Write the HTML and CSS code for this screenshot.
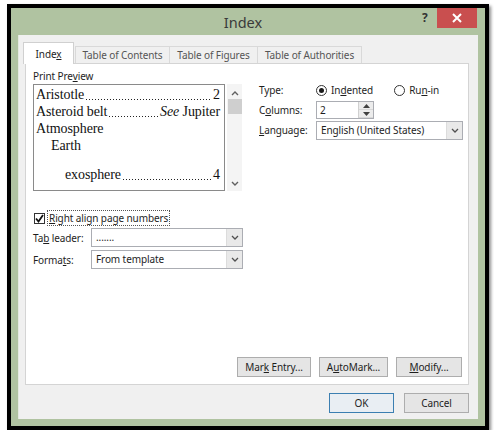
FILE: index.html
```html
<!DOCTYPE html>
<html>
<head>
<meta charset="utf-8">
<link rel="stylesheet" href="styles.css">
</head>
<body>
<div class="dialog">
  <div class="titlebar">
    <span class="title">Index</span>
    <span class="help">?</span>
    <span class="close"><svg width="10" height="10" viewBox="0 0 10 10"><path d="M1 1 L9 9 M9 1 L1 9" stroke="#fff" stroke-width="2"/></svg></span>
  </div>
  <div class="client">
    <div class="tabs">
      <div class="tab active"><span>Inde<u>x</u></span></div>
      <div class="tab"><span>Table of Contents</span></div>
      <div class="tab"><span>Table of Figures</span></div>
      <div class="tab"><span>Table of Authorities</span></div>
    </div>
    <div class="panel">
      <div class="top">
        <div class="preview-col">
          <div class="label">Print Pre<u>v</u>iew</div>
          <div class="preview-wrap">
            <div class="preview">
              <div class="entry"><span>Aristotle</span><span class="leader"></span><span>2</span></div>
              <div class="entry"><span>Asteroid belt</span><span class="leader"></span><span><i>See</i> Jupiter</span></div>
              <div class="entry"><span>Atmosphere</span></div>
              <div class="entry lvl2"><span>Earth</span></div>
              <div class="entry lvl3"><span>exosphere</span><span class="leader"></span><span>4</span></div>
            </div>
            <div class="scrollbar">
              <svg class="arrow" width="8" height="6" viewBox="0 0 8 6"><path d="M1 5 L4 2 L7 5" stroke="#606060" stroke-width="1.4" fill="none"/></svg>
              <div class="thumb"></div>
              <div class="track"></div>
              <svg class="arrow" width="8" height="6" viewBox="0 0 8 6"><path d="M1 1 L4 4 L7 1" stroke="#606060" stroke-width="1.4" fill="none"/></svg>
            </div>
          </div>
        </div>
        <div class="options">
          <div class="opt-label">Type:</div>
          <div class="radios">
            <span class="radio checked"></span><span class="radio-text">In<u>d</u>ented</span>
            <span class="radio second"></span><span class="radio-text">Ru<u>n</u>-in</span>
          </div>
          <div class="opt-label">C<u>o</u>lumns:</div>
          <div class="spin">
            <span class="spin-value">2</span>
            <span class="spin-btns">
              <span class="spin-btn"><svg width="7" height="4" viewBox="0 0 7 4"><path d="M0 4 L3.5 0 L7 4Z" fill="#404040"/></svg></span>
              <span class="spin-btn"><svg width="7" height="4" viewBox="0 0 7 4"><path d="M0 0 L3.5 4 L7 0Z" fill="#404040"/></svg></span>
            </span>
          </div>
          <div class="opt-label"><u>L</u>anguage:</div>
          <div class="select lang">
            <span class="select-value">English (United States)</span>
            <span class="drop"><svg width="8" height="5" viewBox="0 0 8 5"><path d="M1 1 L4 4 L7 1" stroke="#505050" stroke-width="1.3" fill="none"/></svg></span>
          </div>
        </div>
      </div>
      <div class="checkrow">
        <span class="checkbox"><svg width="9" height="9" viewBox="0 0 9 9"><path d="M1 4.5 L3.5 7.5 L8 1" stroke="#111" stroke-width="1.8" fill="none"/></svg></span>
        <span class="focus"><u>R</u>ight align page numbers</span>
      </div>
      <div class="form">
        <div class="form-label">Ta<u>b</u> leader:</div>
        <div class="select">
          <span class="select-value">.......</span>
          <span class="drop"><svg width="8" height="5" viewBox="0 0 8 5"><path d="M1 1 L4 4 L7 1" stroke="#505050" stroke-width="1.3" fill="none"/></svg></span>
        </div>
        <div class="form-label">Forma<u>t</u>s:</div>
        <div class="select">
          <span class="select-value">From template</span>
          <span class="drop"><svg width="8" height="5" viewBox="0 0 8 5"><path d="M1 1 L4 4 L7 1" stroke="#505050" stroke-width="1.3" fill="none"/></svg></span>
        </div>
      </div>
      <div class="spacer"></div>
      <div class="buttons">
        <span class="btn w-mark"><span>Mar<u>k</u> Entry...</span></span>
        <span class="btn w-auto"><span>A<u>u</u>toMark...</span></span>
        <span class="btn w-mod"><span><u>M</u>odify...</span></span>
      </div>
    </div>
    <div class="footer">
      <span class="btn ok"><span>OK</span></span>
      <span class="btn"><span>Cancel</span></span>
    </div>
  </div>
</div>
</body>
</html>
```

FILE: styles.css
```css
html, body {
  margin: 0;
  padding: 0;
  background: #ffffff;
}

body {
  padding: 4px 0 0 7px;
  font-family: "Noto Sans", "Open Sans", sans-serif;
  font-size: 10px;
  color: #1e1e1e;
  letter-spacing: -0.1px;
}

u {
  text-decoration: underline;
  text-underline-offset: 1px;
}

.dialog {
  width: 474px;
  height: 418px;
  border: 4px solid #000;
  background: #b0c3a1;
  box-shadow: 2px 2px 3px rgba(0, 0, 0, 0.45);
  display: flex;
  flex-direction: column;
}

.titlebar {
  height: 27px;
  display: flex;
  align-items: flex-start;
}

.title {
  flex: 1;
  text-align: center;
  font-size: 14.5px;
  line-height: 28px;
  color: #3a3a3a;
  letter-spacing: 0;
  padding-left: 53px;
}

.help {
  width: 8px;
  line-height: 20px;
  font-weight: bold;
  font-size: 12px;
  color: #333;
  margin-right: 7px;
}

.close {
  width: 40px;
  height: 20px;
  background: #c94f4f;
  margin-right: 8px;
  display: flex;
  align-items: center;
  justify-content: center;
}

.client {
  flex: 1;
  margin: 0 7px 7px 7px;
  background: #f0f0f0;
  padding: 7px 9px 0 6px;
  display: flex;
  flex-direction: column;
  border-left: 1px solid #e4e9e0;
}

.tabs {
  display: flex;
  align-items: flex-end;
  height: 21px;
  position: relative;
  z-index: 1;
}

.tab {
  height: 17px;
  line-height: 16px;
  border: 1px solid #d9d9d9;
  border-bottom: none;
  background: #f0f0f0;
  color: #555;
  margin-left: -1px;
  box-sizing: border-box;
  white-space: nowrap;
  display: flex;
  justify-content: center;
}

.tab:nth-child(2) { width: 95px; margin-left: 1px; }
.tab:nth-child(3) { width: 89px; }
.tab:nth-child(4) { width: 105px; }

.tab.active {
  height: 22px;
  line-height: 22px;
  width: 51px;
  background: #fff;
  color: #1e1e1e;
  border-color: #d0d0d0;
  margin-left: -2px;
  margin-bottom: -1px;
}

.panel {
  height: 322px;
  box-sizing: border-box;
  border: 1px solid #d4d4d4;
  background: #fff;
  padding: 6px 6px 7px 7px;
  display: flex;
  flex-direction: column;
}

.top {
  display: flex;
}

.preview-col {
  width: 210px;
}

.label {
  line-height: 13px;
  margin-bottom: 1px;
}

.preview-wrap {
  display: flex;
  height: 107px;
}

.preview {
  width: 192px;
  box-sizing: border-box;
  border: 1px solid #8a8a8a;
  padding: 1px 4px 0 2px;
  font-family: "Liberation Serif", "Times New Roman", serif;
  font-size: 14px;
  color: #111;
  line-height: 17px;
  overflow: hidden;
}

.entry {
  display: flex;
  white-space: nowrap;
}

.leader {
  flex: 1;
  margin: 0 1px;
  background-image: radial-gradient(circle, #222 0.6px, transparent 0.9px);
  background-size: 3px 3px;
  background-repeat: repeat-x;
  background-position: 0 12px;
}

.lvl2 { padding-left: 15px; }
.lvl3 { padding-left: 29px; margin-top: 12px; }

.scrollbar {
  width: 15px;
  margin-left: 2px;
  background: #f4f4f4;
  display: flex;
  flex-direction: column;
  align-items: center;
  padding: 6px 0 4px;
  box-sizing: border-box;
}

.thumb {
  width: 14px;
  height: 15px;
  background: #cfcfcf;
  margin-top: 3px;
}

.track { flex: 1; }

.options {
  margin-left: 17px;
  margin-top: 10px;
  display: grid;
  grid-template-columns: 57px auto;
  grid-auto-rows: 20px;
  align-items: center;
}

.radios {
  display: flex;
  align-items: center;
}

.radio {
  width: 11px;
  height: 11px;
  border: 1px solid #333;
  border-radius: 50%;
  box-sizing: border-box;
  display: flex;
  align-items: center;
  justify-content: center;
  margin-right: 4px;
}

.radio.checked::after {
  content: "";
  width: 5px;
  height: 5px;
  border-radius: 50%;
  background: #1a1a1a;
}

.radio.second { margin-left: 21px; }

.spin {
  width: 58px;
  height: 18px;
  box-sizing: border-box;
  border: 1px solid #abadb3;
  display: flex;
  justify-content: space-between;
  padding-left: 3px;
}

.spin-value { line-height: 16px; }

.spin-btns {
  width: 14px;
  display: flex;
  flex-direction: column;
  border-left: 1px solid #d0d0d0;
}

.spin-btn {
  flex: 1;
  background: #ececec;
  display: flex;
  align-items: center;
  justify-content: center;
  border-bottom: 1px solid #d8d8d8;
}

.select {
  height: 19px;
  width: 152px;
  box-sizing: border-box;
  border: 1px solid #abadb3;
  display: flex;
  justify-content: space-between;
  align-items: stretch;
  padding-left: 4px;
}

.select.lang { width: 147px; }

.select-value { line-height: 17px; }

.drop {
  width: 15px;
  background: #e9e9e9;
  display: flex;
  align-items: center;
  justify-content: center;
  border-left: 1px solid #dcdcdc;
}

.checkrow {
  margin-top: 19px;
  display: flex;
  align-items: center;
  height: 16px;
}

.checkbox {
  width: 11px;
  height: 11px;
  box-sizing: border-box;
  border: 1px solid #333;
  display: flex;
  align-items: center;
  justify-content: center;
  margin-left: 1px;
  margin-right: 2px;
}

.focus {
  border: 1px dotted #555;
  padding: 0 1px;
  line-height: 14px;
}

.form {
  margin-top: 2px;
  display: grid;
  grid-template-columns: 58px 152px;
  grid-template-rows: 19px 19px;
  row-gap: 3px;
  align-items: center;
}

.spacer { flex: 1; }

.buttons {
  display: flex;
  justify-content: flex-end;
  gap: 8px;
}

.btn {
  height: 20px;
  box-sizing: border-box;
  border: 1px solid #adadad;
  background: #e5e5e5;
  display: inline-flex;
  align-items: center;
  justify-content: center;
  white-space: nowrap;
}

.w-mark { width: 74px; }
.w-auto { width: 69px; }
.w-mod { width: 66px; }

.footer {
  margin-top: 8px;
  display: flex;
  justify-content: flex-end;
  gap: 10px;
}

.footer .btn {
  width: 65px;
  height: 20px;
}

.footer .btn.ok {
  border-color: #3c7fb1;
  background: #e9eef3;
}
```
